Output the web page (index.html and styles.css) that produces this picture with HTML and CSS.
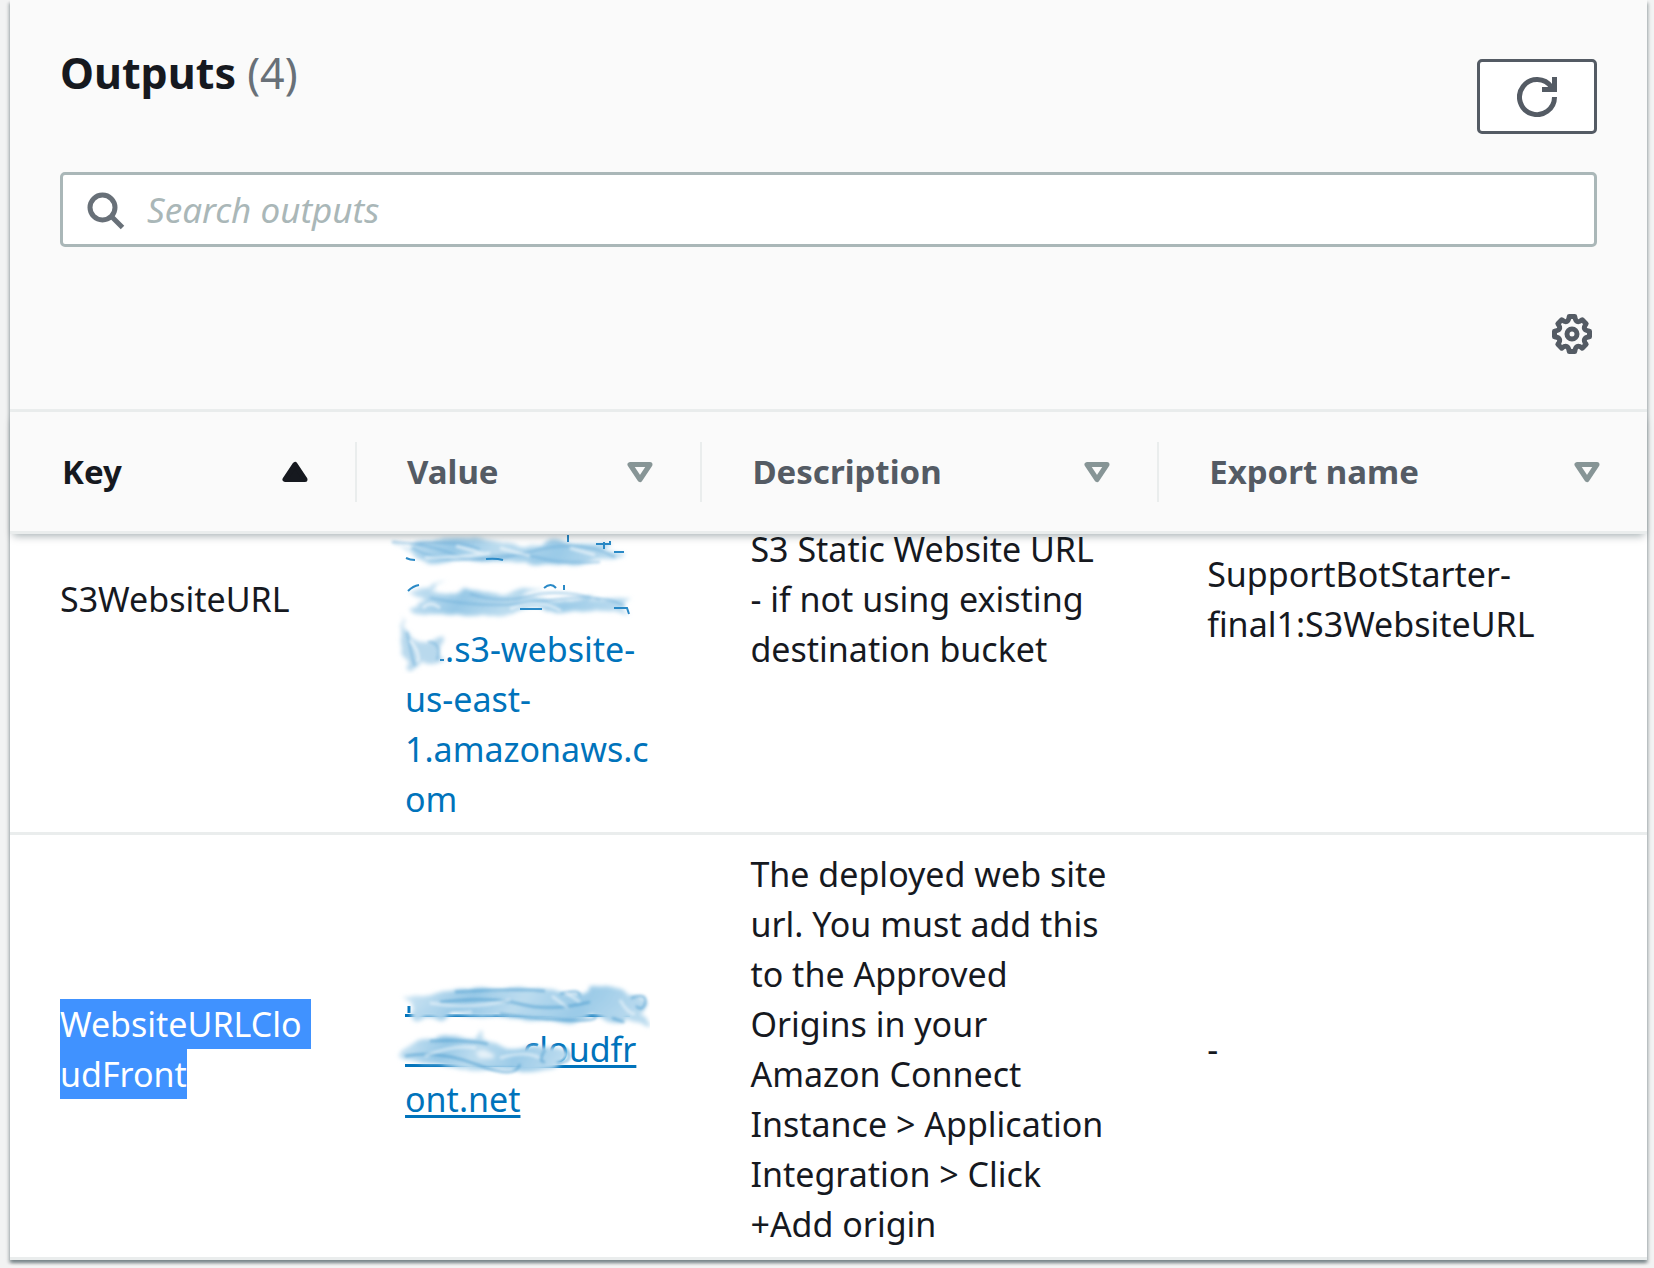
FILE: index.html
```html
<!DOCTYPE html>
<html lang="en">
<head>
<meta charset="utf-8">
<title>Outputs</title>
<meta name="viewport" content="width=device-width, initial-scale=1">
<link rel="stylesheet" href="styles.css">
</head>
<body>
<main class="card">
  <header class="card-header">
    <div class="title-row">
      <h1 class="title">Outputs <span class="count">(4)</span></h1>
      <button class="refresh" type="button" aria-label="Refresh">
        <svg class="icon" viewBox="0 0 16 16"><path d="M10 5h5V0"/><path d="M15 8a7 7 0 1 1-1.2-3.9"/></svg>
      </button>
    </div>
    <div class="search">
      <svg class="icon search-icon" viewBox="0 0 16 16"><circle cx="7" cy="7" r="5"/><path d="M10.500 10.500L15 15"/></svg>
      <input class="search-input" type="text" placeholder="Search outputs" aria-label="Search outputs">
    </div>
    <div class="tools">
      <button class="settings" type="button" aria-label="Settings">
        <svg class="icon" viewBox="0 0 16 16"><path stroke-linejoin="round" d="M6.900 1H9.100Q9.530 4.300 12.100 2.340L13.660 3.890Q11.700 6.470 15 6.900V9.100Q11.700 9.530 13.660 12.100L12.100 13.660Q9.530 11.700 9.100 15H6.900Q6.470 11.700 3.890 13.660L2.340 12.100Q4.300 9.530 1 9.100V6.900Q4.300 6.470 2.340 3.890L3.890 2.340Q6.470 4.300 6.900 1z"/><circle cx="8" cy="8" r="2"/></svg>
      </button>
    </div>
  </header>

  <table class="outputs">
    <colgroup><col class="col-key"><col class="col-value"><col class="col-desc"><col></colgroup>
    <thead>
      <tr>
        <th scope="col"><div class="head sorted">Key <svg class="icon" viewBox="0 0 16 16"><path fill="currentColor" stroke-linejoin="round" d="M4 11h8L8 5z"/></svg></div></th>
        <th scope="col"><div class="head">Value <svg class="icon sort" viewBox="0 0 16 16"><path stroke-linejoin="round" d="M4 5h8l-4 6z"/></svg></div></th>
        <th scope="col"><div class="head">Description <svg class="icon sort" viewBox="0 0 16 16"><path stroke-linejoin="round" d="M4 5h8l-4 6z"/></svg></div></th>
        <th scope="col"><div class="head">Export name <svg class="icon sort" viewBox="0 0 16 16"><path stroke-linejoin="round" d="M4 5h8l-4 6z"/></svg></div></th>
      </tr>
    </thead>
    <tbody>
      <tr class="under-header">
        <td><div class="cell">S3WebsiteURL</div></td>
        <td>
          <div class="cell">
            <a class="link" href="#s3"><br><br><span class="gap-short"></span>.s3-website-<br>us-east-<br>1.amazonaws.c<br>om</a>
            <svg class="smudge" viewBox="0 0 270 150" aria-hidden="true">
              <defs>
                <filter id="soft" x="-10%" y="-30%" width="120%" height="160%"><feGaussianBlur stdDeviation="1.500"/></filter>
                <filter id="wisp" x="-10%" y="-30%" width="120%" height="160%"><feTurbulence type="fractalNoise" baseFrequency="0.030 0.090" numOctaves="2" seed="4"/><feDisplacementMap in="SourceGraphic" scale="12" xChannelSelector="R" yChannelSelector="G"/><feGaussianBlur stdDeviation="2"/></filter>
                <linearGradient id="haze" x1="0" x2="1" y1="0" y2="0.100">
                  <stop offset="0" stop-color="#d3e8f5"/><stop offset=".3" stop-color="#97c8e6"/><stop offset=".5" stop-color="#bcdcef"/><stop offset=".75" stop-color="#9acae7"/><stop offset="1" stop-color="#b9daee"/>
                </linearGradient>
              </defs>
              <g filter="url(#wisp)">
                <path fill="url(#haze)" d="M10 18Q20 24 30 29Q45 40 68 40L90 37Q120 38 150 37Q185 44 210 40L236 34L244 29L222 26L232 20L200 20Q178 12 160 21Q120 20 100 15Q60 12 42 17Q30 20 30 25Z"/>
                <path fill="url(#haze)" d="M25 69Q50 65 66 57L50 69Q75 68 86 63Q110 72 128 69Q150 62 164 63L140 73Q165 76 190 77L215 70L210 75L252 72Q240 80 248 90Q220 82 190 89Q150 84 130 90Q100 94 80 90Q60 94 35 91Q26 84 44 78Z"/>
                <path fill="#b9d9ed" d="M20 93Q26 110 36 118Q48 124 58 114L64 112Q57 126 64 136Q52 146 40 140L32 148Q21 140 20 93Z"/>
              </g>
              <g fill="none" stroke="#69acd8" stroke-width="2" filter="url(#soft)" opacity=".6">
                <path d="M12 18Q50 20 75 31T150 28T235 33M32 24Q60 40 100 34T160 34T220 38M50 74Q110 86 165 77T245 82M90 70Q120 80 150 72T220 76M27 108Q32 135 35 142M48 118Q62 118 57 136M30 20Q80 16 100 26"/>
              </g>
              <g fill="none" stroke="#fff" stroke-width="3" filter="url(#soft)" opacity=".6">
                <path d="M45 34Q90 33 110 29M60 84Q50 76 43 84M130 85Q160 73 181 87M76 22L105 30M190 24L215 31M30 116Q40 128 38 138M120 24L150 32"/>
              </g>
              <g fill="none" stroke="#2a89c6" stroke-width="2">
                <path d="M26 34Q30 36 35 36M106 35Q116 34 123 36M188 11v7M216 20h14v-3M224 18v7M234 28h10M28 67Q33 62 39 61M164 64Q171 58 176 64M184 61v5M140 85h22M234 84h13l2 6M60 136h4"/>
              </g>
            </svg>
          </div>
        </td>
        <td><div class="cell">S3 Static Website URL<br>- if not using existing<br>destination bucket</div></td>
        <td><div class="cell">SupportBotStarter-<br>final1:S3WebsiteURL</div></td>
      </tr>
      <tr>
        <td><span class="selected selected-wrap">WebsiteURLClo</span><br><span class="selected">udFront</span></td>
        <td>
          <div class="cell">
            <a class="link underlined" href="#cloudfront"><br><span class="gap-long"></span>cloudfr<br>ont.net</a>
            <svg class="smudge" viewBox="0 0 270 150" aria-hidden="true">
              <path d="M25 41.500H250M25 91.500H143" stroke="#0073bb" stroke-width="3"/>
              <path d="M29 32v7" stroke="#0073bb" stroke-width="3"/>
              <g filter="url(#wisp)">
                <path fill="url(#haze)" d="M22 24Q60 16 110 14Q150 15 165 17L205 20L212 12Q234 11 250 22Q266 26 266 34L262 40Q276 52 268 52L246 44Q240 52 230 48L212 42Q195 50 170 48Q140 44 110 44L84 42L60 45L46 40L36 50L30 48Q38 36 30 30Z"/>
                <path fill="url(#haze)" d="M20 79Q30 67 55 66Q85 61 97 65L100 55L106 67Q130 74 145 74Q180 70 188 80Q186 93 166 94Q140 98 130 94Q95 99 72 95Q38 92 20 79Z"/>
                <path fill="#e6f2f9" d="M96 78Q106 73 112 81Q104 87 98 83Z"/>
              </g>
              <g fill="none" stroke="#3f95cb" stroke-width="2" filter="url(#soft)" opacity=".7">
                <path d="M75 18Q140 14 165 17M180 20Q200 14 200 22M120 40Q150 44 185 46T215 41M232 44l12 4M251 24Q268 18 265 30Q262 38 256 32M50 67Q85 65 108 70M25 82Q60 76 98 91T140 90M165 76q-8 12 0 12M185 74q12 14-8 15M60 28Q110 22 140 30T210 28"/>
              </g>
              <g fill="none" stroke="#fff" stroke-width="3" filter="url(#soft)" opacity=".5">
                <path d="M50 29Q90 36 130 26M172 22L188 34M185 18L200 28M240 26Q248 40 255 40M45 82Q75 70 96 74M120 84Q145 76 160 84M70 40L92 38"/>
              </g>
            </svg>
          </div>
        </td>
        <td>The deployed web site<br>url. You must add this<br>to the Approved<br>Origins in your<br>Amazon Connect<br>Instance &gt; Application<br>Integration &gt; Click<br>+Add origin</td>
        <td>-</td>
      </tr>
    </tbody>
  </table>
</main>
</body>
</html>
```
FILE: styles.css
```css
* { box-sizing: border-box; }

body {
  margin: 0;
  padding: 0 7px 8px 10px;
  background: #f2f3f3;
  color: #16191f;
  font: 34px/50px "Noto Sans", "Open Sans", sans-serif;
}

.card {
  background: #fff;
  box-shadow: 0 3px 3px rgba(0, 28, 36, .3), 2px 3px 3px rgba(0, 28, 36, .15), -2px 3px 3px rgba(0, 28, 36, .15);
}

.icon {
  display: block;
  flex: none;
  width: 40px;
  height: 40px;
  fill: none;
  stroke: currentColor;
  stroke-width: 2;
}

.card-header {
  padding: 48px 50px 55px;
  background: #fafafa;
  border-bottom: 3px solid #eaeded;
}

.title-row {
  display: flex;
  justify-content: space-between;
  align-items: flex-start;
  margin-bottom: 38px;
}

.title {
  margin: 0;
  font-size: 43px;
  line-height: 50px;
  font-weight: 700;
}

.count { color: #687078; font-weight: 400; }

.refresh {
  display: flex;
  align-items: center;
  justify-content: center;
  width: 120px;
  height: 75px;
  margin-top: 11px;
  padding: 0;
  border: 3px solid #545b64;
  border-radius: 5px;
  background: #fff;
  color: #545b64;
}

.search {
  display: flex;
  align-items: center;
  gap: 22px;
  height: 75px;
  padding: 0 22px;
  border: 3px solid #aab7b8;
  border-radius: 5px;
  background: #fff;
}

.search-icon { color: #687078; }

.search-input {
  flex: 1;
  min-width: 0;
  padding: 0;
  border: 0;
  outline: 0;
  background: none;
  font: inherit;
  font-size: 35px;
  color: #16191f;
}

.search-input::placeholder { color: #aab7b8; font-style: italic; opacity: 1; }

.tools {
  display: flex;
  justify-content: flex-end;
  margin-top: 67px;
  padding-right: 5px;
}

.settings {
  padding: 0;
  border: 0;
  background: none;
  color: #545b64;
}

.outputs {
  width: 100%;
  table-layout: fixed;
  border-collapse: separate;
  border-spacing: 0;
}

.col-key { width: 21.2%; }
.col-value { width: 21.1%; }
.col-desc { width: 27.9%; }

thead {
  position: relative;
  z-index: 2;
  box-shadow: 0 5px 8px -3px rgba(0, 28, 36, .35);
}

th {
  height: 122px;
  padding: 0;
  background: #fafafa;
  border-bottom: 3px solid #eaeded;
  color: #545b64;
  font-size: 33px;
  font-weight: 700;
  text-align: left;
}

.head {
  display: flex;
  align-items: center;
  justify-content: space-between;
  height: 60px;
  padding: 0 40px 0 50px;
  border-right: 2px solid #eaeded;
}

th:first-child .head { padding-left: 52px; }
th:last-child .head { border-right: 0; }

.sorted { color: #16191f; }
.sort { color: #879596; }

td {
  padding: 14px 0 8px 48px;
  border-bottom: 3px solid #eaeded;
  vertical-align: middle;
  white-space: nowrap;
}

td:first-child { padding-left: 50px; }

.cell { position: relative; }

/* The first row is scrolled partly beneath the table header. */
.under-header td { vertical-align: top; }
.under-header .cell {
  display: grid;
  align-content: center;
  min-height: 150px;
  margin-top: -24px;
}

.link { color: #0073bb; text-decoration: none; }

.underlined {
  text-decoration: underline;
  text-decoration-thickness: 3px;
  text-underline-offset: 3px;
  text-decoration-skip-ink: none;
}

.gap-short { display: inline-block; width: 40px; }
.gap-long { display: inline-block; width: 118px; }

.smudge {
  position: absolute;
  top: 0;
  left: -25px;
  width: 270px;
  height: 150px;
  pointer-events: none;
}

.selected {
  display: inline-block;
  height: 50px;
  background: #4092ff;
  color: #fff;
  vertical-align: top;
}

.selected-wrap { padding-right: 9px; }
```
